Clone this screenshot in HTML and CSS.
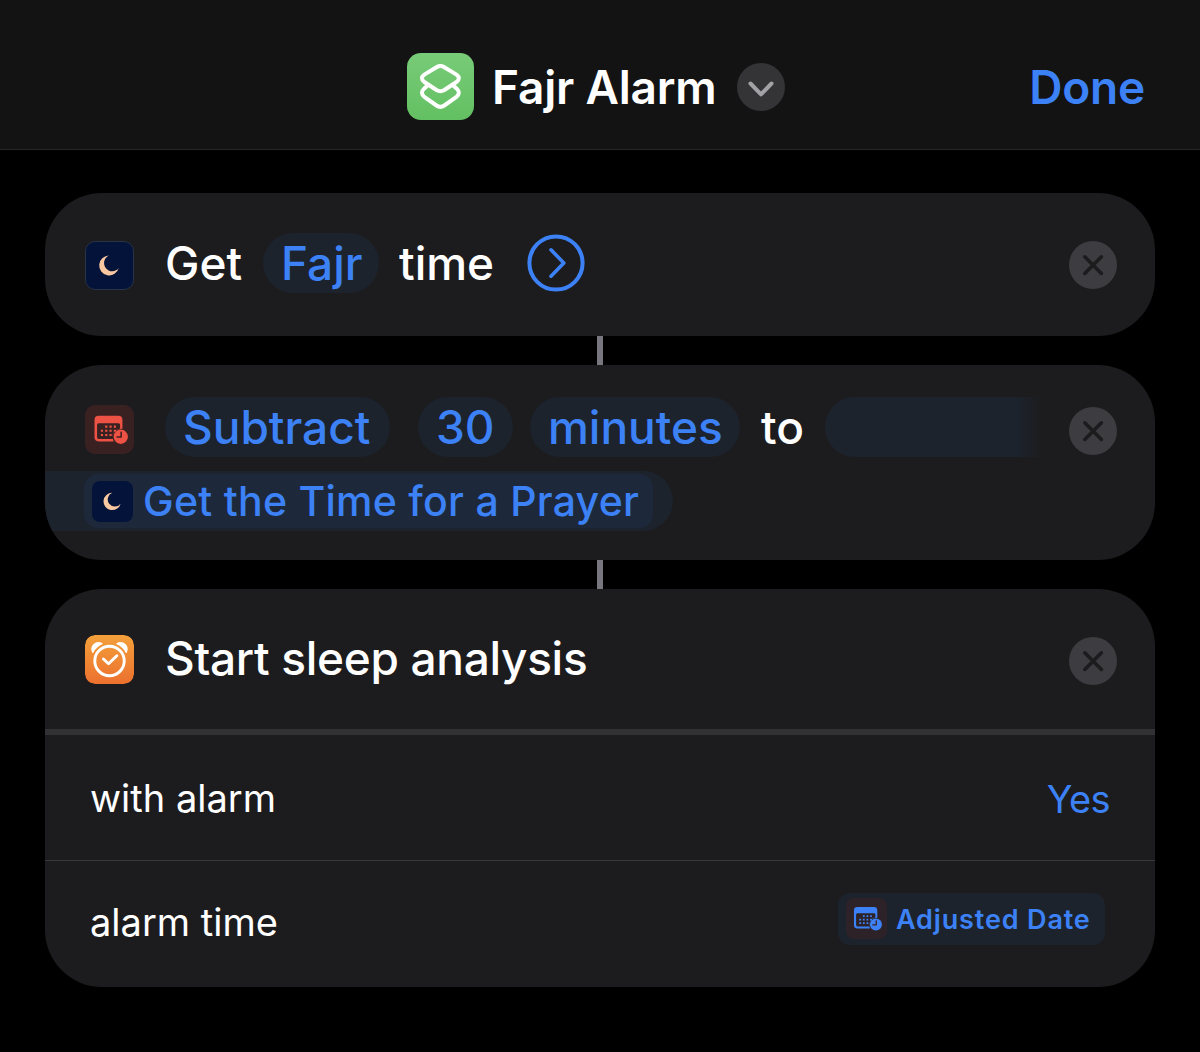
FILE: index.html
```html
<!DOCTYPE html>
<html lang="en">
<head>
    <meta charset="UTF-8">
    <meta name="viewport" content="width=device-width, initial-scale=1.0">
    <title>Fajr Alarm</title>
    <link rel="stylesheet" href="styles.css">
</head>
<body>
    <svg class="sprite" width="0" height="0">
        <symbol id="close" viewBox="0 0 48 48">
            <circle cx="24" cy="24" r="24" fill="#3d3d41"/>
            <path d="M15.8 15.8l16.6 16.6M32.4 15.8l-16.6 16.6" fill="none" stroke="#1c1c1e" stroke-width="3.6" stroke-linecap="round"/>
        </symbol>
        <symbol id="moon" viewBox="0 0 50 50">
            <path d="M24.8 14.3A10.6 10.6 0 1 0 34.9 27.6A8.7 8.7 0 1 1 24.8 14.3Z" fill="#f9c8a0"/>
        </symbol>
        <symbol id="calendar" viewBox="0 0 50 50">
            <path fill="currentColor" fill-rule="evenodd" d="M13.9 11H34A4.2 4.2 0 0 1 38.200 15.200V24.200A8.800 8.800 0 0 0 28.500 35L29.200 37.200H13.900A4.200 4.200 0 0 1 9.700 33V15.200A4.200 4.200 0 0 1 13.900 11ZM14 18.500A1.700 1.700 0 0 0 12.300 20.200V33A1.700 1.700 0 0 0 14 34.700H28.300A8.800 8.800 0 0 1 35.800 23.900V20.200A1.700 1.700 0 0 0 34.100 18.500Z"/>
            <path d="M20.600 22h11M16.200 26.300h15.400M16.200 30.600h11" fill="none" stroke="currentColor" stroke-width="2.200" stroke-dasharray="2.200 2.200"/>
            <circle cx="36.500" cy="32.400" r="7.300" fill="currentColor"/>
            <path d="M36.900 27.800v4.900h-4.200" fill="none" stroke="#40201f" stroke-width="1.600" stroke-linecap="round" stroke-linejoin="round"/>
        </symbol>
    </svg>

    <header class="header">
        <div class="title-group">
            <svg class="app-icon" viewBox="0 0 67 67">
                <defs>
                    <linearGradient id="green" x1="0" y1="0" x2="0" y2="1">
                        <stop offset="0" stop-color="#78cb78"/>
                        <stop offset="1" stop-color="#63c062"/>
                    </linearGradient>
                </defs>
                <rect width="67" height="67" rx="14" fill="url(#green)"/>
                <g fill="none" stroke="#fff" stroke-width="4" stroke-linejoin="round">
                    <path d="M29.500 14.200L17.300 21.600Q12.600 25.200 17.300 29L29.500 37Q33.400 39.300 37.300 37L49.500 29Q54.200 25.200 49.500 21.600L37.300 14.200Q33.400 11.900 29.500 14.200Z"/>
                    <path d="M20.500 32.500L17.300 35.400Q12.600 40 17.300 43.800L29.500 52.500Q33.400 55.200 37.300 52.500L49.500 43.800Q54.200 40 49.500 35.400L46.300 32.500"/>
                </g>
            </svg>
            <h1 class="title">Fajr Alarm</h1>
            <svg class="chevron" viewBox="0 0 48 48">
                <circle cx="24" cy="24" r="24" fill="#343437"/>
                <path d="M13.500 20.500L24 31.300L34.500 20.500" fill="none" stroke="#a1a1a6" stroke-width="4" stroke-linecap="round" stroke-linejoin="round"/>
            </svg>
        </div>
        <a class="done">Done</a>
    </header>

    <main class="actions">
        <section class="card card-get">
            <div class="icon icon-moon"><svg viewBox="0 0 50 50"><use href="#moon"/></svg></div>
            <div class="phrase">
                <span class="get">Get</span>
                <span class="pill pill-fajr">Fajr</span>
                <span class="time">time</span>
                <svg class="expand" viewBox="0 0 58 58">
                    <g fill="none" stroke="#3c82f6" stroke-linecap="round" stroke-linejoin="round">
                        <circle cx="29" cy="29" r="26.600" stroke-width="4"/>
                        <path d="M24 15.800L36.800 29L24 42.200" stroke-width="3.600"/>
                    </g>
                </svg>
            </div>
            <svg class="close"><use href="#close"/></svg>
        </section>

        <div class="connector"></div>

        <section class="card card-adjust">
            <div class="adjust-row">
                <div class="icon icon-calendar"><svg viewBox="0 0 50 50"><use href="#calendar"/></svg></div>
                <span class="pill pill-subtract">Subtract</span>
                <span class="pill pill-number">30</span>
                <span class="pill pill-unit">minutes</span>
                <span class="to">to</span>
                <span class="pill-fade"></span>
                <svg class="close"><use href="#close"/></svg>
            </div>
            <div class="variable-wrap">
                <div class="variable">
                    <div class="icon icon-small"><svg viewBox="0 0 50 50"><use href="#moon"/></svg></div>
                    <span class="variable-name">Get the Time for a Prayer</span>
                </div>
            </div>
        </section>

        <div class="connector"></div>

        <section class="card card-sleep">
            <div class="sleep-head">
                <svg class="icon alarm" viewBox="0 0 50 50">
                    <defs>
                        <linearGradient id="orange" x1="0" y1="0" x2="0" y2="1">
                            <stop offset="0" stop-color="#f3a03b"/>
                            <stop offset="1" stop-color="#ec712e"/>
                        </linearGradient>
                    </defs>
                    <rect width="50" height="50" rx="10" fill="url(#orange)"/>
                    <path d="M7.900 17.700C5.200 11.500 11 5.700 17.300 8.900Q11 11.800 7.900 17.700ZM42.100 17.700C44.800 11.500 39 5.700 32.700 8.900Q39 11.800 42.100 17.700Z" fill="#fff" stroke="#fff" stroke-width="1.400" stroke-linejoin="round"/>
                    <circle cx="25" cy="26.500" r="15" fill="none" stroke="#fff" stroke-width="3"/>
                    <path d="M18.800 24.500L24 29.300L32.500 21.200" fill="none" stroke="#fff" stroke-width="3" stroke-linecap="round" stroke-linejoin="round"/>
                </svg>
                <span class="sleep-title">Start sleep analysis</span>
                <svg class="close"><use href="#close"/></svg>
            </div>
            <div class="option option-alarm">
                <span class="label">with alarm</span>
                <span class="value">Yes</span>
            </div>
            <div class="option option-time">
                <span class="label">alarm time</span>
                <span class="tag">
                    <span class="icon tag-icon"><svg viewBox="0 0 50 50"><use href="#calendar"/></svg></span>
                    <span class="tag-name">Adjusted Date</span>
                </span>
            </div>
        </section>
    </main>
</body>
</html>
```
FILE: styles.css
```css
:root {
    --blue: #3c82f6;
    --card: #1c1c1e;
    --pill: #1c232d;
    --white: #ffffff;
}

* {
    margin: 0;
    padding: 0;
    box-sizing: border-box;
}

body {
    background-color: #000;
    color: var(--white);
    font-family: Inter, "Liberation Sans", sans-serif;
    font-size: 46px;
    font-weight: 500;
    line-height: 60px;
    height: 1052px;
    overflow: hidden;
    white-space: nowrap;
}

svg {
    display: block;
    flex-shrink: 0;
}

.sprite {
    position: absolute;
}

.header {
    display: grid;
    grid-template-columns: 1fr auto 1fr;
    align-items: center;
    height: 150px;
    padding: 24px 55px 0 47px;
    background-color: #131313;
    border-bottom: 1px solid #262628;
}

.title-group {
    grid-column: 2;
    display: flex;
    align-items: center;
}

.app-icon {
    width: 67px;
    height: 67px;
    margin-right: 18px;
}

.title {
    width: 224px;
    margin-right: 21px;
    font-size: 46px;
    font-weight: 600;
    letter-spacing: -0.2px;
}

.chevron,
.close {
    width: 48px;
    height: 48px;
}

.done {
    justify-self: end;
    color: var(--blue);
    font-weight: 600;
    letter-spacing: -0.2px;
}

.actions {
    padding: 43px 45px 0;
}

.card {
    background-color: var(--card);
    border-radius: 57px;
    overflow: hidden;
}

.connector {
    width: 6px;
    height: 29px;
    margin: 0 auto;
    background-color: #77777d;
}

.icon {
    width: 49px;
    height: 49px;
    flex-shrink: 0;
    border-radius: 10px;
}

.icon svg {
    width: 100%;
    height: 100%;
}

.icon-moon,
.icon-small {
    background-color: #03133a;
}

.icon-moon {
    border: 1px solid #283345;
}

.icon-calendar {
    margin-top: 4px;
    background-color: #392122;
    color: #ee5244;
}

.close {
    margin-left: auto;
}

.pill {
    height: 60px;
    padding: 0 18px;
    border-radius: 30px;
    background-color: var(--pill);
    color: var(--blue);
}

.card-get {
    display: flex;
    align-items: center;
    height: 143px;
    padding: 1px 38px 0 40px;
}

.phrase {
    display: flex;
    align-items: center;
    margin: 0 0 5px 31px;
}

.get {
    width: 78px;
    margin-right: 20px;
}

.pill-fajr {
    width: 116px;
}

.time {
    width: 94px;
    margin: 0 34px 0 20px;
}

.expand {
    width: 58px;
    height: 58px;
}

.card-adjust {
    height: 195px;
    padding-top: 32px;
}

.adjust-row {
    display: flex;
    align-items: center;
    padding: 0 38px 0 40px;
}

.adjust-row .close {
    margin-top: 7px;
}

.pill-subtract {
    width: 225px;
    margin-left: 31px;
}

.pill-number {
    width: 95px;
    margin: 0 17px 0 28px;
}

.pill-unit {
    width: 210px;
}

.to {
    width: 43px;
    margin: 0 21px;
}

.pill-fade {
    width: 220px;
    height: 60px;
    border-radius: 30px 0 0 30px;
    background: linear-gradient(to right, var(--pill) 190px, var(--card) 217px);
}

.variable-wrap {
    width: 628px;
    height: 60px;
    margin-top: 14px;
    padding: 3px 20px 3px 39px;
    border-radius: 0 30px 30px 0;
    background-color: var(--pill);
}

.variable {
    display: flex;
    align-items: center;
    height: 54px;
    padding-left: 8px;
    border-radius: 14px;
    background-color: #1d293b;
    color: var(--blue);
}

.icon-small {
    width: 41px;
    height: 41px;
    margin-right: 10px;
    border-radius: 8px;
}

.variable-name {
    font-size: 41px;
    letter-spacing: 0.27px;
}

.card-sleep {
    height: 398px;
}

.sleep-head {
    display: flex;
    align-items: center;
    height: 146px;
    padding: 1px 38px 0 40px;
    border-bottom: 6px solid #323234;
}

.sleep-head .close {
    margin-top: 3px;
}

.sleep-title {
    margin: -3px 0 0 31px;
    letter-spacing: -0.32px;
}

.option {
    display: flex;
    align-items: center;
    justify-content: space-between;
    padding: 0 45px;
    font-size: 38px;
    font-weight: 400;
}

.option-alarm {
    height: 126px;
    border-bottom: 1px solid #38383a;
}

.value {
    margin-top: 2px;
    color: var(--blue);
    letter-spacing: -0.6px;
}

.option-time {
    height: 122px;
}

.tag {
    display: flex;
    align-items: center;
    width: 267px;
    height: 52px;
    margin: -7px 5px 0 0;
    padding-left: 8px;
    border-radius: 12px;
    background-color: var(--pill);
    color: var(--blue);
    font-size: 27px;
    font-weight: 600;
}

.tag-icon {
    width: 41px;
    height: 41px;
    margin: -1px 9px 0 0;
    border-radius: 8px;
    background-color: #2c2228;
}

.tag-name {
    padding-top: 2px;
    letter-spacing: 0.85px;
}
```
